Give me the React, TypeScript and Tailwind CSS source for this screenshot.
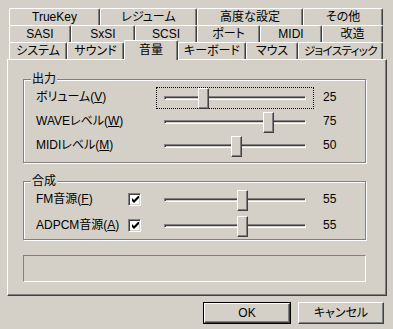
import React from 'react';

type TabDef = { label: string; w: string; active?: boolean; tight?: boolean };

const rows: TabDef[][] = [
  [
    { label: 'TrueKey', w: 'w-[91px]' },
    { label: 'レジューム', w: 'w-[97px]' },
    { label: '高度な設定', w: 'w-[106px]' },
    { label: 'その他', w: 'w-[80px]' },
  ],
  [
    { label: 'SASI', w: 'w-[62px]' },
    { label: 'SxSI', w: 'w-[64px]' },
    { label: 'SCSI', w: 'w-[62px]' },
    { label: 'ポート', w: 'w-[63px]' },
    { label: 'MIDI', w: 'w-[62px]' },
    { label: '改造', w: 'w-[61px]' },
  ],
  [
    { label: 'システム', w: 'w-[58px]' },
    { label: 'サウンド', w: 'w-[57px]' },
    { label: '音量', w: 'w-[54px]', active: true },
    { label: 'キーボード', w: 'w-[68px]' },
    { label: 'マウス', w: 'w-[52px]' },
    { label: 'ジョイスティック', w: 'w-[85px]', tight: true },
  ],
];

const Tab = ({ tab }: { tab: TabDef }) => {
  if (tab.active) {
    return (
      <div
        className={`${tab.w} relative z-10 h-[20px] -mb-[1px] flex items-center justify-center pb-[1px] bg-[#d4d0c8] border-t border-l border-r border-t-white border-l-white border-r-[#404040] rounded-t-[2px] shadow-[inset_-1px_0_0_#808080]`}
      >
        {tab.label}
      </div>
    );
  }
  return (
    <div
      className={`${tab.w} ${tab.tight ? 'tracking-[-0.6px] text-[11.5px]' : ''} h-[17px] flex items-center justify-center bg-[#d4d0c8] border-t border-l border-r border-t-white border-l-white border-r-[#404040] rounded-t-[2px] shadow-[inset_-1px_0_0_#808080]`}
    >
      {tab.label}
    </div>
  );
};

// 0..100 -> thumb offset inside the slider box
const Slider = ({ value, focus }: { value: number; focus?: boolean }) => (
  <div
    className={`relative w-[158px] h-[22px] flex items-center px-[7px] border ${
      focus ? 'border-dotted border-black' : 'border-transparent'
    }`}
  >
    <div className="flex-1 h-[4px] border border-t-[#808080] border-l-[#808080] border-b-white border-r-white shadow-[inset_1px_1px_0_#404040] bg-[#d4d0c8]" />
    <div
      className="absolute top-0 w-[11px] h-[21px] bg-[#d4d0c8] border border-t-white border-l-white border-r-[#404040] border-b-[#404040] shadow-[inset_-1px_-1px_0_#808080]"
      style={{ left: Math.round(8 + value * 1.31) }}
    />
  </div>
);

const Checkbox = () => (
  <div className="w-[13px] h-[13px] flex items-center justify-center bg-white border border-t-[#808080] border-l-[#808080] border-b-white border-r-white shadow-[inset_1px_1px_0_#404040,inset_-1px_-1px_0_#d4d0c8]">
    <svg width="7" height="7" viewBox="0 0 7 7" className="ml-[1px] mt-[1px]">
      <polygon points="0,2 2,4 7,-1 7,2 2,7 0,5" fill="#000" />
    </svg>
  </div>
);

const Key = ({ ch }: { ch: string }) => <span className="underline underline-offset-[1px]">{ch}</span>;

const GroupLabel = ({ text }: { text: string }) => (
  <span className="absolute left-[7px] -top-[8px] px-[1px] leading-[14px] bg-[#d4d0c8]">{text}</span>
);

const outputs = [
  { label: <>ボリューム(<Key ch="V" />)</>, value: 25, focus: true },
  { label: <>WAVEレベル(<Key ch="W" />)</>, value: 75 },
  { label: <>MIDIレベル(<Key ch="M" />)</>, value: 50 },
];

const synths = [
  { label: <>FM音源(<Key ch="F" />)</>, value: 55 },
  { label: <>ADPCM音源(<Key ch="A" />)</>, value: 55 },
];

export default function App() {
  return (
    <div className="w-[393px] h-[329px] bg-[#d4d0c8] text-black text-[12px] leading-[14px] font-['Liberation_Sans','Noto_Sans_CJK_JP',sans-serif] [font-feature-settings:'palt'] overflow-hidden">
      <div className="pt-[8px] pl-[9px]">
        {rows.map((row, i) => (
          <div key={i} className="flex items-end h-[17px]">
            {row.map((t) => (
              <Tab key={t.label} tab={t} />
            ))}
          </div>
        ))}
      </div>

      <div className="ml-[7px] w-[380px] h-[237px] border border-t-white border-l-white border-r-[#404040] border-b-[#404040] shadow-[inset_-1px_-1px_0_#808080] pt-[19px] pl-[15px]">
        <div className="relative w-[343px] h-[84px] border border-[#808080] shadow-[inset_1px_1px_0_#fff,1px_1px_0_#fff] pt-[6px] pl-[12px]">
          <GroupLabel text="出力" />
          {outputs.map((o, i) => (
            <div key={i} className="flex items-center h-[24px]">
              <div className="w-[120px] -mt-[3px]">{o.label}</div>
              <Slider value={o.value} focus={o.focus} />
              <div className="ml-[9px] -mt-[2px]">{o.value}</div>
            </div>
          ))}
        </div>

        <div className="relative mt-[18px] w-[343px] h-[59px] border border-[#808080] shadow-[inset_1px_1px_0_#fff,1px_1px_0_#fff] pt-[6px] pl-[12px] flex flex-col gap-[2px]">
          <GroupLabel text="合成" />
          {synths.map((s, i) => (
            <div key={i} className="flex items-center h-[24px]">
              <div className="w-[92px] -mt-[3px]">{s.label}</div>
              <div className="-mt-[2px]">
                <Checkbox />
              </div>
              <div className="ml-[15px]">
                <Slider value={s.value} />
              </div>
              <div className="ml-[9px] -mt-[2px]">{s.value}</div>
            </div>
          ))}
        </div>

        <div className="mt-[15px] w-[343px] h-[27px] border border-t-[#808080] border-l-[#808080] border-b-white border-r-white" />
      </div>

      <div className="mt-[6px] flex justify-end pr-[9px] gap-[7px]">
        <div className="w-[88px] h-[22px] border border-black">
          <div className="h-full flex items-center justify-center border border-t-white border-l-white border-r-[#404040] border-b-[#404040] shadow-[inset_-1px_-1px_0_#808080]">
            OK
          </div>
        </div>
        <div className="w-[86px] h-[22px] flex items-center justify-center border border-t-white border-l-white border-r-[#404040] border-b-[#404040] shadow-[inset_-1px_-1px_0_#808080]">
          キャンセル
        </div>
      </div>
    </div>
  );
}
